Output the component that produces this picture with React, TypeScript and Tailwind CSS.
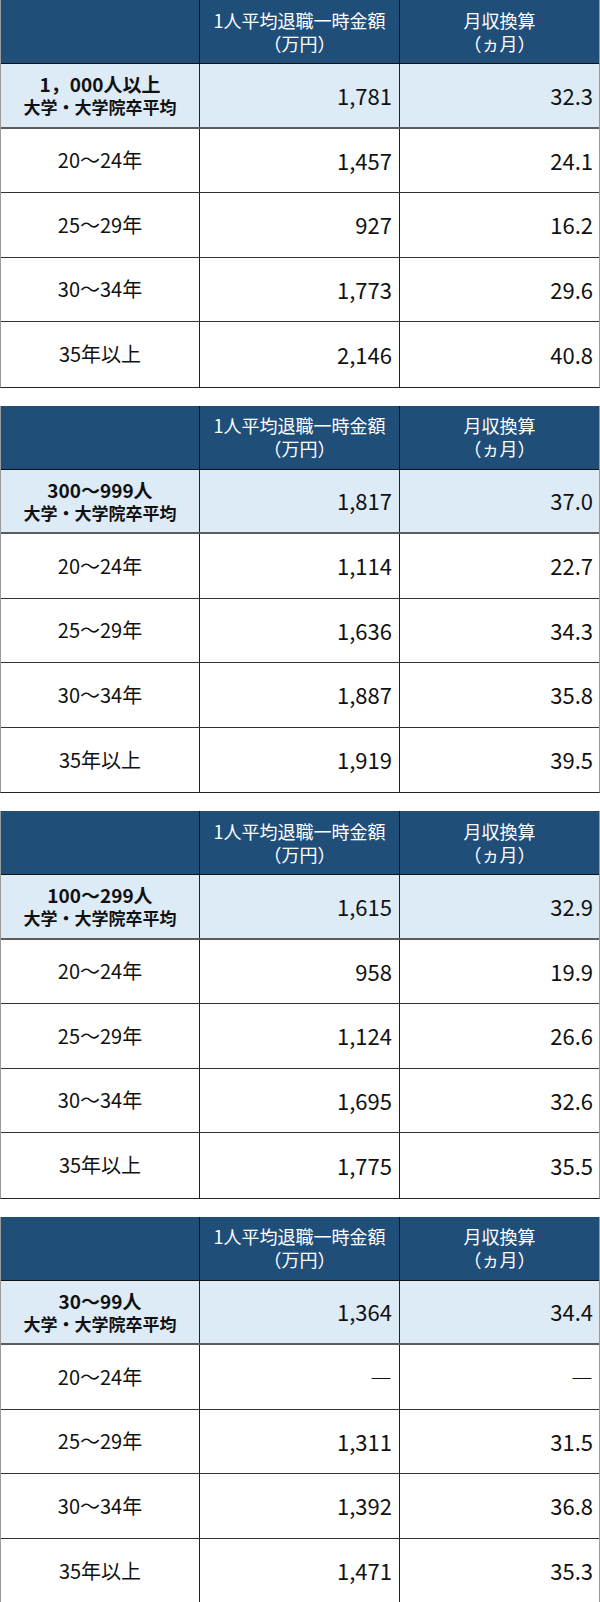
import React from 'react';

type Row = { label: string; amount: string; months: string };

type Section = {
  title: string;
  average: { amount: string; months: string };
  rows: Row[];
};

const SECTIONS: Section[] = [
  {
    title: '1，000人以上',
    average: { amount: '1,781', months: '32.3' },
    rows: [
      { label: '20～24年', amount: '1,457', months: '24.1' },
      { label: '25～29年', amount: '927', months: '16.2' },
      { label: '30～34年', amount: '1,773', months: '29.6' },
      { label: '35年以上', amount: '2,146', months: '40.8' },
    ],
  },
  {
    title: '300～999人',
    average: { amount: '1,817', months: '37.0' },
    rows: [
      { label: '20～24年', amount: '1,114', months: '22.7' },
      { label: '25～29年', amount: '1,636', months: '34.3' },
      { label: '30～34年', amount: '1,887', months: '35.8' },
      { label: '35年以上', amount: '1,919', months: '39.5' },
    ],
  },
  {
    title: '100～299人',
    average: { amount: '1,615', months: '32.9' },
    rows: [
      { label: '20～24年', amount: '958', months: '19.9' },
      { label: '25～29年', amount: '1,124', months: '26.6' },
      { label: '30～34年', amount: '1,695', months: '32.6' },
      { label: '35年以上', amount: '1,775', months: '35.5' },
    ],
  },
  {
    title: '30～99人',
    average: { amount: '1,364', months: '34.4' },
    rows: [
      { label: '20～24年', amount: '―', months: '―' },
      { label: '25～29年', amount: '1,311', months: '31.5' },
      { label: '30～34年', amount: '1,392', months: '36.8' },
      { label: '35年以上', amount: '1,471', months: '35.3' },
    ],
  },
];

const FONT = { fontFamily: '"Noto Sans CJK JP", "Noto Sans", sans-serif' };

const RetirementTable = ({ section }: { section: Section }) => {
  return (
    <div className="w-full border-x border-[#9a9a9a] border-b border-b-[#222]">
      {/* header */}
      <div className="flex h-[64px] bg-[#1f4e79] border-b border-[#111] text-white text-[18px] leading-[23px]">
        <div className="w-[199px] border-r border-[#111]" />
        <div className="w-[200px] border-r border-[#111] flex flex-col items-center justify-center">
          <span>1人平均退職一時金額</span>
          <span>（万円）</span>
        </div>
        <div className="flex-1 flex flex-col items-center justify-center">
          <span>月収換算</span>
          <span>（ヵ月）</span>
        </div>
      </div>

      {/* average row */}
      <div className="flex h-[64.5px] bg-[#ddebf7] border-b-2 border-[#5c5c5c] text-[#111]">
        <div className="w-[199px] border-r border-[#222] flex flex-col items-center justify-center font-bold">
          <span className="text-[19px] leading-[23px]">{section.title}</span>
          <span className="text-[17px] leading-[23px]">大学・大学院卒平均</span>
        </div>
        <div className="w-[200px] border-r border-[#222] flex items-center justify-end pr-[7px] text-[22px]">
          {section.average.amount}
        </div>
        <div className="flex-1 flex items-center justify-end pr-[6px] text-[22px]">
          {section.average.months}
        </div>
      </div>

      {section.rows.map((row, i) => (
        <div
          key={row.label}
          className={`flex h-[64.5px] text-[#111] ${i < section.rows.length - 1 ? 'border-b border-[#333]' : ''}`}
        >
          <div className="w-[199px] border-r border-[#222] flex items-center justify-center text-[20px]">
            {row.label}
          </div>
          <div className="w-[200px] border-r border-[#222] flex items-center justify-end pr-[7px] text-[22px]">
            {row.amount}
          </div>
          <div className="flex-1 flex items-center justify-end pr-[6px] text-[22px]">{row.months}</div>
        </div>
      ))}
    </div>
  );
};

export default function App() {
  return (
    <div className="w-[600px] bg-white flex flex-col gap-[18px]" style={FONT}>
      {SECTIONS.map((s) => (
        <RetirementTable key={s.title} section={s} />
      ))}
    </div>
  );
}
